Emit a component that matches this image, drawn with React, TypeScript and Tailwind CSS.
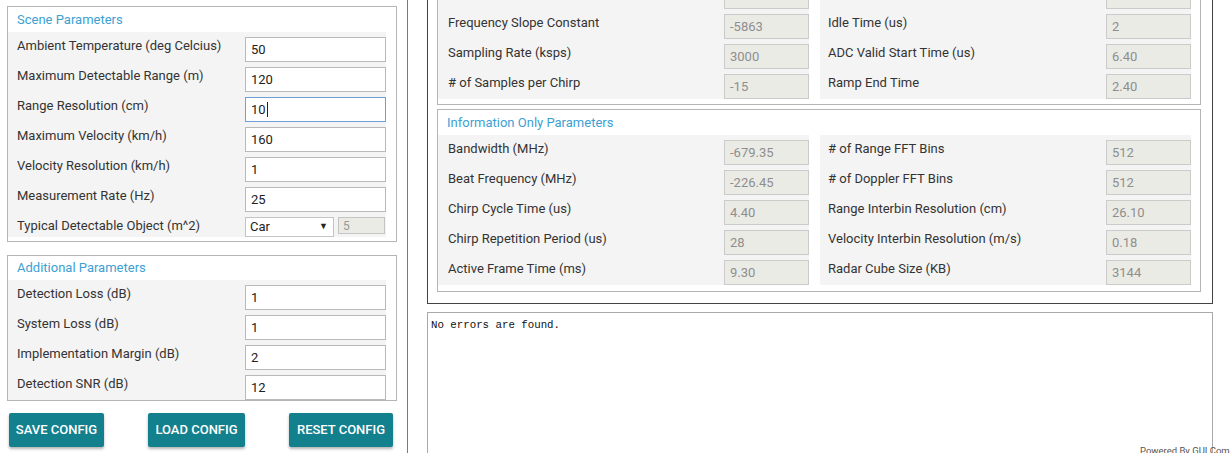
import React from "react";

const font = { fontFamily: "Roboto, 'Liberation Sans', sans-serif" };

function Field({ value, focused }: { value: string; focused?: boolean }) {
  return (
    <div
      className={`w-[141px] h-[25px] bg-white border ${focused ? "border-[#6e9fdb]" : "border-[#b9b9b9]"} flex items-center pl-[5px] text-[13px] text-[#222] shrink-0`}
    >
      <span>{value}</span>
      {focused && <span className="w-px h-[15px] bg-[#222] ml-px" />}
    </div>
  );
}

function RoField({ value }: { value: string }) {
  return (
    <div className="w-[85px] h-[25px] bg-[#ebebe6] border border-[#cbcbcb] flex items-center pl-[5px] text-[13px] text-[#8e8e8e] shrink-0">
      {value}
    </div>
  );
}

function Row({ label, children }: { label: string; children: React.ReactNode }) {
  return (
    <div className="flex items-start justify-between h-[25px]">
      <span className="pl-[9px] text-[13px] leading-[18px] text-[#333]">{label}</span>
      {children}
    </div>
  );
}

function RRow({ label, value, pl }: { label: string; value: string; pl: string }) {
  return (
    <div className="flex items-start justify-between h-[25px]">
      <span className={`${pl} text-[13px] leading-[18px] text-[#333]`}>{label}</span>
      <RoField value={value} />
    </div>
  );
}

const scene: [string, string, boolean?][] = [
  ["Ambient Temperature (deg Celcius)", "50"],
  ["Maximum Detectable Range (m)", "120"],
  ["Range Resolution (cm)", "10", true],
  ["Maximum Velocity (km/h)", "160"],
  ["Velocity Resolution (km/h)", "1"],
  ["Measurement Rate (Hz)", "25"],
];

const additional: [string, string][] = [
  ["Detection Loss (dB)", "1"],
  ["System Loss (dB)", "1"],
  ["Implementation Margin (dB)", "2"],
  ["Detection SNR (dB)", "12"],
];

const topLeft: [string, string][] = [
  ["", ""],
  ["Frequency Slope Constant", "-5863"],
  ["Sampling Rate (ksps)", "3000"],
  ["# of Samples per Chirp", "-15"],
];
const topRight: [string, string][] = [
  ["", ""],
  ["Idle Time (us)", "2"],
  ["ADC Valid Start Time (us)", "6.40"],
  ["Ramp End Time", "2.40"],
];
const infoLeft: [string, string][] = [
  ["Bandwidth (MHz)", "-679.35"],
  ["Beat Frequency (MHz)", "-226.45"],
  ["Chirp Cycle Time (us)", "4.40"],
  ["Chirp Repetition Period (us)", "28"],
  ["Active Frame Time (ms)", "9.30"],
];
const infoRight: [string, string][] = [
  ["# of Range FFT Bins", "512"],
  ["# of Doppler FFT Bins", "512"],
  ["Range Interbin Resolution (cm)", "26.10"],
  ["Velocity Interbin Resolution (m/s)", "0.18"],
  ["Radar Cube Size (KB)", "3144"],
];

function Btn({ label, w }: { label: string; w: string }) {
  return (
    <button
      className={`${w} h-[34px] bg-[#13808e] text-white text-[13px] font-medium rounded-[2px] shadow-[0_2px_3px_rgba(0,0,0,0.3)] flex items-center justify-center`}
    >
      {label}
    </button>
  );
}

export default function App() {
  return (
    <div className="relative w-[1230px] h-[453px] overflow-hidden bg-white flex" style={font}>
      {/* Left column */}
      <div className="w-[408px] h-full border-r border-[#7a7a7a] shrink-0 flex flex-col pl-[7px]">
        <div className="mt-[6px] w-[390px] border border-[#b5b5b5] pb-[4px] shrink-0">
          <div className="h-[25px] flex items-center pl-[9px] text-[13px] text-[#3d9fd3]">Scene Parameters</div>
          <div className="w-[378px] bg-[#f4f4f4] pt-[5px] flex flex-col gap-[5px]">
            {scene.map(([l, v, f]) => (
              <Row key={l} label={l}>
                <Field value={v} focused={f} />
              </Row>
            ))}
            <div className="flex items-start justify-between h-[20px]">
              <span className="pl-[9px] text-[13px] leading-[18px] text-[#333]">Typical Detectable Object (m^2)</span>
              <div className="flex items-start gap-[4px] w-[141px]">
                <div className="w-[89px] h-[20px] bg-white border border-[#c4c4c4] flex items-center justify-between pl-[4px] pr-[5px] text-[13px] text-[#222]">
                  <span>Car</span>
                  <span className="text-[9px] text-[#222]">▼</span>
                </div>
                <div className="w-[47px] h-[17px] bg-[#ebebe6] border border-[#c4c4c4] flex items-center pl-[4px] text-[12px] text-[#999]">
                  5
                </div>
              </div>
            </div>
          </div>
        </div>

        <div className="mt-[13px] w-[390px] h-[146px] border border-[#b5b5b5] overflow-hidden shrink-0">
          <div className="h-[24px] flex items-center pl-[9px] text-[13px] text-[#3d9fd3]">Additional Parameters</div>
          <div className="w-[378px] bg-[#f4f4f4] pt-[5px] flex flex-col gap-[5px]">
            {additional.map(([l, v]) => (
              <Row key={l} label={l}>
                <Field value={v} />
              </Row>
            ))}
          </div>
        </div>

        <div className="mt-[12px] ml-[2px] w-[384px] flex justify-between shrink-0">
          <Btn label="SAVE CONFIG" w="w-[95px]" />
          <Btn label="LOAD CONFIG" w="w-[97px]" />
          <Btn label="RESET CONFIG" w="w-[104px]" />
        </div>
      </div>

      {/* Right column */}
      <div className="ml-[19px] w-[786px] flex flex-col shrink-0">
        <div className="-mt-[29px] border border-[#444] px-[9px] pt-[6px] pb-[11px] flex flex-col gap-[4px] shrink-0">
          <div className="w-[764px] border border-[#b5b5b5] pb-[5px]">
            <div className="flex gap-[11px] w-[753px]">
              <div className="w-[371px] bg-[#f4f4f4] pt-[5px] flex flex-col gap-[5px]">
                {topLeft.map(([l, v], i) => (
                  <RRow key={i} label={l} value={v} pl="pl-[10px]" />
                ))}
              </div>
              <div className="w-[371px] bg-[#f4f4f4] pt-[5px] flex flex-col gap-[5px]">
                {topRight.map(([l, v], i) => (
                  <RRow key={i} label={l} value={v} pl="pl-[8px]" />
                ))}
              </div>
            </div>
          </div>

          <div className="w-[764px] border border-[#b5b5b5] pb-[6px]">
            <div className="h-[25px] flex items-center pl-[9px] text-[13px] text-[#3d9fd3]">Information Only Parameters</div>
            <div className="flex gap-[11px] w-[753px]">
              <div className="w-[371px] bg-[#f4f4f4] pt-[5px] flex flex-col gap-[5px]">
                {infoLeft.map(([l, v]) => (
                  <RRow key={l} label={l} value={v} pl="pl-[10px]" />
                ))}
              </div>
              <div className="w-[371px] bg-[#f4f4f4] pt-[5px] flex flex-col gap-[5px]">
                {infoRight.map(([l, v]) => (
                  <RRow key={l} label={l} value={v} pl="pl-[8px]" />
                ))}
              </div>
            </div>
          </div>
        </div>

        <div
          className="mt-[8px] h-[200px] shrink-0 border border-[#a9a9a9] pl-[3px] pt-[4px] text-[10.75px] text-[#111]"
          style={{ fontFamily: "'Liberation Mono', 'DejaVu Sans Mono', monospace" }}
        >
          No errors are found.
        </div>
      </div>

      <div className="absolute right-0 bottom-[-5px] text-[9.5px] text-[#555] w-[90px] whitespace-nowrap overflow-hidden">
        Powered By GUI Composer
      </div>
    </div>
  );
}
